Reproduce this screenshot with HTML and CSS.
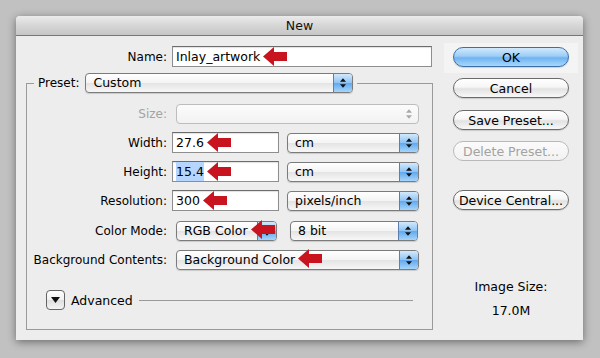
FILE: index.html
```html
<!DOCTYPE html>
<html lang="en">
<head>
    <meta charset="UTF-8">
    <title>New</title>
    <link rel="stylesheet" href="styles.css">
</head>
<body>
    <div class="dialog">
        <div class="titlebar">New</div>

        <div class="content">
            <div class="main">
                <div class="name-row">
                    <span class="label name-label">Name:</span>
                    <div class="field name-field">
                        <span class="value">Inlay_artwork</span>
                        <svg class="arrow" viewBox="0 0 24 19"><polygon points="0,9.5 11,0 11,5 24,5 24,14 11,14 11,19"/></svg>
                    </div>
                </div>

                <fieldset class="group">
                    <legend class="legend">
                        <span class="label">Preset:</span>
                        <div class="popup preset-popup">
                            <span class="value">Custom</span>
                            <span class="stepper"><svg viewBox="0 0 7 11"><polygon points="3.5,0 7,4 0,4"/><polygon points="0,7 7,7 3.5,11"/></svg></span>
                        </div>
                    </legend>

                    <div class="row">
                        <span class="label disabled">Size:</span>
                        <div class="popup wide-popup off">
                            <span class="value"></span>
                            <span class="stepper"><svg viewBox="0 0 7 11"><polygon points="3.5,0 7,4 0,4"/><polygon points="0,7 7,7 3.5,11"/></svg></span>
                        </div>
                    </div>

                    <div class="row">
                        <span class="label">Width:</span>
                        <div class="field num-field">
                            <span class="value">27.6</span>
                            <svg class="arrow" viewBox="0 0 24 19"><polygon points="0,9.5 11,0 11,5 24,5 24,14 11,14 11,19"/></svg>
                        </div>
                        <div class="popup unit-popup">
                            <span class="value">cm</span>
                            <span class="stepper"><svg viewBox="0 0 7 11"><polygon points="3.5,0 7,4 0,4"/><polygon points="0,7 7,7 3.5,11"/></svg></span>
                        </div>
                    </div>

                    <div class="row">
                        <span class="label">Height:</span>
                        <div class="field num-field">
                            <span class="value selected">15.4</span>
                            <svg class="arrow" viewBox="0 0 24 19"><polygon points="0,9.5 11,0 11,5 24,5 24,14 11,14 11,19"/></svg>
                        </div>
                        <div class="popup unit-popup">
                            <span class="value">cm</span>
                            <span class="stepper"><svg viewBox="0 0 7 11"><polygon points="3.5,0 7,4 0,4"/><polygon points="0,7 7,7 3.5,11"/></svg></span>
                        </div>
                    </div>

                    <div class="row">
                        <span class="label">Resolution:</span>
                        <div class="field num-field">
                            <span class="value">300</span>
                            <svg class="arrow" viewBox="0 0 24 19"><polygon points="0,9.5 11,0 11,5 24,5 24,14 11,14 11,19"/></svg>
                        </div>
                        <div class="popup unit-popup">
                            <span class="value">pixels/inch</span>
                            <span class="stepper"><svg viewBox="0 0 7 11"><polygon points="3.5,0 7,4 0,4"/><polygon points="0,7 7,7 3.5,11"/></svg></span>
                        </div>
                    </div>

                    <div class="row color-row">
                        <span class="label">Color Mode:</span>
                        <div class="popup mode-popup">
                            <span class="value">RGB Color<svg class="arrow" viewBox="0 0 24 19"><polygon points="0,9.5 11,0 11,5 24,5 24,14 11,14 11,19"/></svg></span>
                            <span class="stepper"><svg viewBox="0 0 7 11"><polygon points="3.5,0 7,4 0,4"/><polygon points="0,7 7,7 3.5,11"/></svg></span>
                        </div>
                        <div class="popup bits-popup">
                            <span class="value">8 bit</span>
                            <span class="stepper"><svg viewBox="0 0 7 11"><polygon points="3.5,0 7,4 0,4"/><polygon points="0,7 7,7 3.5,11"/></svg></span>
                        </div>
                    </div>

                    <div class="row">
                        <span class="label">Background Contents:</span>
                        <div class="popup wide-popup">
                            <span class="value">Background Color<svg class="arrow" viewBox="0 0 24 19"><polygon points="0,9.5 11,0 11,5 24,5 24,14 11,14 11,19"/></svg></span>
                            <span class="stepper"><svg viewBox="0 0 7 11"><polygon points="3.5,0 7,4 0,4"/><polygon points="0,7 7,7 3.5,11"/></svg></span>
                        </div>
                    </div>

                    <div class="advanced">
                        <span class="disclosure"><svg viewBox="0 0 9 6"><polygon points="0,0 9,0 4.5,6"/></svg></span>
                        <span class="advanced-text">Advanced</span>
                        <span class="advanced-line"></span>
                    </div>
                </fieldset>
            </div>

            <div class="side">
                <div class="default-wrap">
                    <button class="btn btn-ok">OK</button>
                </div>
                <button class="btn btn-cancel">Cancel</button>
                <button class="btn btn-save">Save Preset...</button>
                <button class="btn btn-delete" disabled>Delete Preset...</button>
                <button class="btn btn-device">Device Central...</button>

                <div class="image-size">
                    <div>Image Size:</div>
                    <div>17.0M</div>
                </div>
            </div>
        </div>
    </div>
</body>
</html>
```

FILE: styles.css
```css
body {
    margin: 0;
    padding: 16px;
    background: #c1c1c1;
    font-family: "DejaVu Sans", sans-serif;
    font-size: 12px;
    color: #000;
}

.dialog {
    width: 567px;
    height: 324px;
    background: #ededed;
    border-radius: 4px 4px 0 0;
    box-shadow: 0 2px 9px rgba(0, 0, 0, 0.45);
    overflow: hidden;
}

.titlebar {
    height: 19px;
    line-height: 20px;
    text-align: center;
    font-size: 12.5px;
    color: #111;
    background: linear-gradient(#ebebeb, #d6d6d6 50%, #c6c6c6);
    border-bottom: 1px solid #777;
}

.content {
    display: flex;
}

.main {
    width: 417px;
    padding-top: 10px;
}

/* labels */
.label {
    display: inline-block;
    text-align: right;
    white-space: nowrap;
}

.disabled {
    color: #a3a3a3;
}

.name-row {
    display: flex;
    align-items: center;
    height: 21px;
}

.name-label {
    width: 151px;
    margin-right: 5px;
}

/* text fields */
.field {
    display: flex;
    align-items: center;
    box-sizing: border-box;
    height: 21px;
    padding-left: 3px;
    background: #fff;
    border: 1px solid #8e8e8e;
    border-top-color: #6c6c6c;
    box-shadow: inset 0 1px 1px rgba(0, 0, 0, 0.12);
    font-size: 12.5px;
    white-space: nowrap;
}

.name-field {
    width: 260px;
}

.num-field {
    width: 107px;
}

.selected {
    background: #b5d5ff;
    padding: 2px 0;
}

.arrow {
    width: 24px;
    height: 19px;
    margin-left: 3px;
    fill: #c8141f;
    flex: none;
    position: relative;
    z-index: 1;
}

.popup .arrow {
    vertical-align: middle;
    margin-top: -3px;
}

/* group box */
.group {
    box-sizing: border-box;
    width: 407px;
    margin: 6px 0 0 10px;
    padding: 6px 0 19px 0;
    border: 1px solid #9a9a9a;
}

.legend {
    display: flex;
    align-items: center;
    margin-left: 7px;
    padding: 0 4px;
}

.legend .label {
    margin-right: 6px;
}

.row {
    display: flex;
    align-items: center;
    height: 29px;
}

.color-row {
    margin-top: 1px;
}

.row > .label {
    width: 140px;
    margin-right: 5px;
}

/* popup menus */
.popup {
    display: flex;
    box-sizing: border-box;
    height: 20px;
    border: 1px solid #7b7b7b;
    border-radius: 4px;
    background: linear-gradient(#ffffff, #f4f4f4 48%, #e4e4e4 52%, #f7f7f7);
    box-shadow: 0 1px 1px rgba(0, 0, 0, 0.15);
    overflow: visible;
    font-size: 12.5px;
}

.popup .value {
    flex: 1 1 0;
    min-width: 0;
    padding-left: 7px;
    line-height: 18px;
    white-space: nowrap;
}

.stepper {
    display: flex;
    align-items: center;
    justify-content: center;
    width: 18px;
    flex: none;
    border-left: 1px solid #5d7fae;
    border-radius: 0 3px 3px 0;
    background: linear-gradient(#d3e9fc, #8fc4f5 48%, #62a9ee 52%, #a6d5fb);
}

.stepper svg {
    width: 6px;
    height: 10px;
    fill: #111;
}

.preset-popup {
    width: 268px;
}

.wide-popup {
    width: 243px;
    margin-left: 4px;
}

.unit-popup {
    width: 132px;
    margin-left: 8px;
}

.mode-popup {
    width: 101px;
    margin-left: 4px;
}

.bits-popup {
    width: 128px;
    margin-left: 13px;
}

.off {
    border-color: #bdbdbd;
    background: linear-gradient(#fbfbfb, #f2f2f2);
    box-shadow: none;
}

.off .stepper {
    border-left: none;
    background: none;
}

.off .stepper svg {
    fill: #a8a8a8;
}

/* advanced disclosure */
.advanced {
    display: flex;
    align-items: center;
    height: 20px;
    margin-top: 16px;
    padding: 0 19px;
}

.disclosure {
    display: flex;
    align-items: center;
    justify-content: center;
    box-sizing: border-box;
    width: 19px;
    height: 20px;
    border: 1px solid #646464;
    border-radius: 4px;
    background: linear-gradient(#ffffff, #f0f0f0 50%, #dedede 52%, #f4f4f4);
}

.disclosure svg {
    width: 9px;
    height: 6px;
    fill: #111;
}

.advanced-text {
    margin: 0 6px;
    font-size: 12.5px;
}

.advanced-line {
    flex: 1;
    height: 1px;
    background: #9a9a9a;
}

/* right button column */
.side {
    display: flex;
    flex-direction: column;
    align-items: flex-start;
    padding-left: 11px;
}

.default-wrap {
    margin-top: 7px;
    padding: 4px 9px 6px;
    background: #f4f4f4;
}

.btn {
    display: block;
    box-sizing: border-box;
    width: 116px;
    height: 20px;
    padding: 0;
    font-family: "DejaVu Sans", sans-serif;
    font-size: 12.5px;
    color: #000;
    border: 1px solid #6a6a6a;
    border-radius: 10px;
    background: linear-gradient(#ffffff, #f6f6f6 45%, #e2e2e2 55%, #f8f8f8);
    box-shadow: 0 1px 1px rgba(0, 0, 0, 0.15);
}

.side > .btn {
    margin-left: 9px;
}

.btn-ok {
    border-color: #3c6fa8;
    background: linear-gradient(#d2e9fc, #9ccdf7 45%, #6fb3f1 55%, #a8d8fc);
}

.btn-cancel {
    margin-top: 5px;
}

.btn-save {
    margin-top: 12px;
}

.btn-delete {
    margin-top: 11px;
    color: #a2a2a2;
    border-color: #b9b9b9;
    background: linear-gradient(#fbfbfb, #f2f2f2);
    box-shadow: none;
}

.btn-device {
    margin-top: 29px;
}

.image-size {
    width: 134px;
    margin-top: 65px;
    text-align: center;
    line-height: 24px;
    font-size: 12.5px;
}
```
